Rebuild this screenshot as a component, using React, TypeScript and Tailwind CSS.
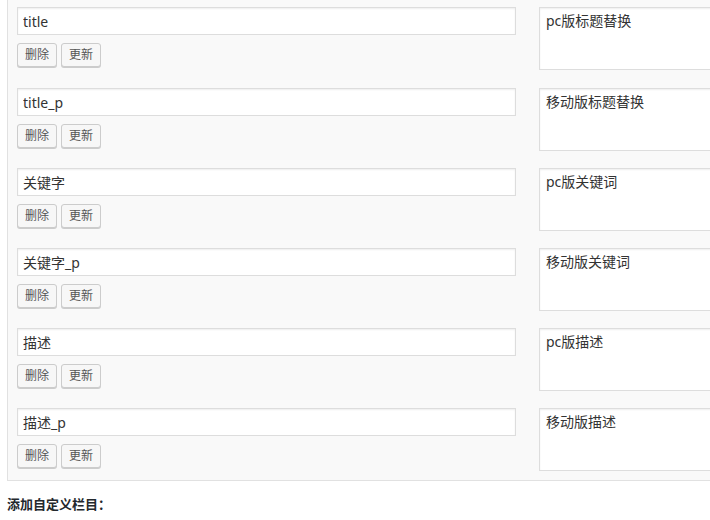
const fields = [
  { key: "title", value: "pc版标题替换" },
  { key: "title_p", value: "移动版标题替换" },
  { key: "关键字", value: "pc版关键词" },
  { key: "关键字_p", value: "移动版关键词" },
  { key: "描述", value: "pc版描述" },
  { key: "描述_p", value: "移动版描述" },
];

function FieldButton({ label }: { label: string }) {
  return (
    <button className="h-[24px] w-[40px] rounded-[3px] border border-[#cccccc] bg-[#f7f7f7] text-[12px] leading-[22px] text-[#555555] shadow-[0_1px_0_#cccccc]">
      {label}
    </button>
  );
}

function FieldRow({ fieldKey, value, first }: { fieldKey: string; value: string; first?: boolean }) {
  return (
    <div className={"flex gap-[23px] " + (first ? "mb-[1px]" : "")}>
      <div className="flex w-[499px] shrink-0 flex-col gap-[8px]">
        <input
          readOnly
          value={fieldKey}
          className="h-[28px] w-full border border-[#dddddd] bg-white px-[5px] text-[14px] text-[#333333] shadow-[inset_0_1px_2px_rgba(0,0,0,0.07)] outline-none"
        />
        <div className="flex gap-[4px]">
          <FieldButton label="删除" />
          <FieldButton label="更新" />
        </div>
      </div>
      <textarea
        readOnly
        value={value}
        className="h-[63px] w-[220px] shrink-0 resize-none border border-[#dddddd] bg-white px-[6px] py-[3px] text-[14px] leading-[20px] text-[#333333] shadow-[inset_0_1px_2px_rgba(0,0,0,0.07)] outline-none"
      />
    </div>
  );
}

export default function App() {
  return (
    <div
      className="h-[520px] w-[710px] overflow-hidden bg-white"
      style={{ fontFamily: '"Noto Sans", "Noto Sans CJK SC", sans-serif' }}
    >
      <div className="ml-[7px] w-[760px] border-b border-l border-[#e1e1e1] bg-[#f9f9f9] pb-[9px] pl-[9px] pt-[7px]">
        <div className="flex flex-col gap-[17px]">
          {fields.map((f, i) => (
            <FieldRow key={f.key} fieldKey={f.key} value={f.value} first={i === 0} />
          ))}
        </div>
      </div>
      <p
        className="ml-[7px] mt-[14px] text-[13px] font-bold leading-[18px] text-[#23282d]"
        style={{ fontFamily: '"Noto Sans CJK SC", sans-serif' }}
      >
        添加自定义栏目：
      </p>
    </div>
  );
}
